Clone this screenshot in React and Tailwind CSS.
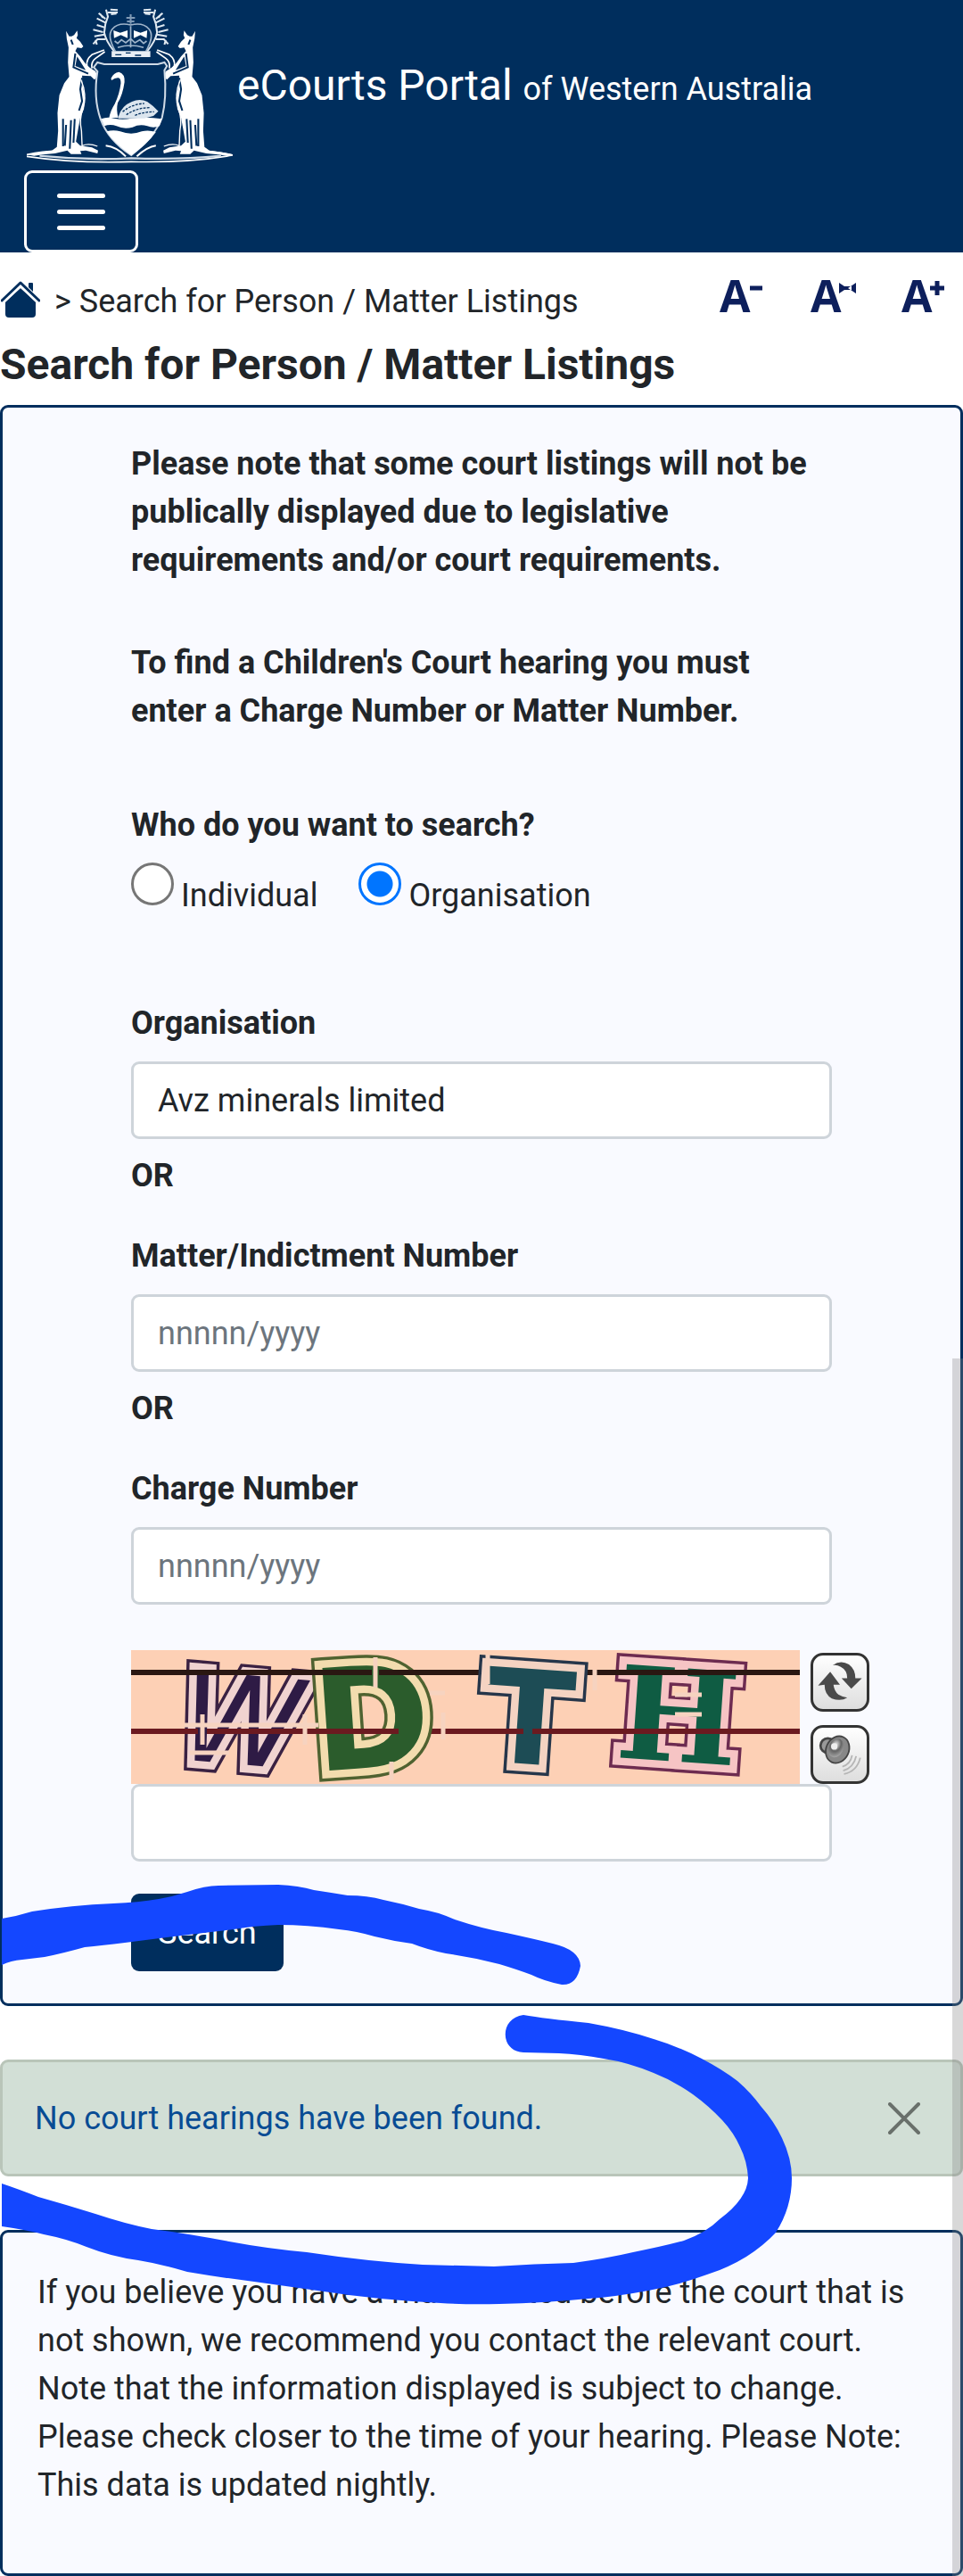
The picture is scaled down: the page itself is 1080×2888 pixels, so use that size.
import React, { useState } from 'react';

function CoatOfArms() {
  const kangaroo = (
    <>
      <path
        d="M216 104 L226 122 L234 122 L242 118 L252 103 L254 118 L250 128 L262 140 L272 156 L266 162 L252 160 L246 172 L262 190 L276 210 L290 226 L312 240 L318 258 L308 268 L296 256 L268 254 L270 290 L278 330 L274 366 L262 396 L256 430 L248 476 L262 490 L300 496 L320 506 L318 516 L280 506 L262 508 L266 518 L232 518 L220 506 L180 516 L140 520 L112 524 L88 520 L130 512 L170 506 L186 494 L190 440 L188 380 L194 320 L210 280 L226 258 L222 210 L224 160 L218 130 Z"
        fill="#fff"
      />
      <path
        d="M246 180 L240 226 L288 248 M232 134 L238 150 M268 262 L262 300 L268 340 L258 372 M206 400 L206 492 M232 404 L228 500 M216 420 L212 490 M244 400 L240 480"
        fill="none"
        stroke="#002e5d"
        strokeWidth="6"
      />
      <path d="M252 190 L246 222 L280 236 Z" fill="#002e5d" />
      <path d="M264 268 Q286 320 270 368 Q258 400 266 440 L268 490 Q290 480 318 492" fill="none" stroke="#fff" strokeWidth="4" />
      <path d="M340 168 L300 184 Q280 200 284 222 L304 244 M342 174 L312 196 Q296 208 300 230" fill="none" stroke="#fff" strokeWidth="5" />
      <path
        d="M384 34 L360 32 M384 42 L352 42 M346 32 L352 56 L344 80 L340 110 Q346 140 372 172 M322 44 L344 64 M316 62 L344 76 M316 84 L340 92 M304 100 L336 108 M308 122 L340 116 M304 148 L318 132 L344 132 M326 46 L336 60 M362 48 L380 46 M312 134 L316 150"
        fill="none"
        stroke="#dfe8f0"
        strokeWidth="6"
      />
    </>
  );

  return (
    <svg
      viewBox="88 24 670 525"
      preserveAspectRatio="none"
      className="h-[175px] w-[231px] shrink-0"
      role="img"
      aria-label="Western Australia coat of arms"
    >
      {kangaroo}
      <g transform="translate(852 0) scale(-1 1)">{kangaroo}</g>
      {/* crown */}
      <path
        d="M376 172 Q348 120 366 98 Q386 74 426 84 Q466 74 486 98 Q504 120 476 172"
        fill="none"
        stroke="#9fb4ca"
        strokeWidth="5"
      />
      <path d="M426 48 V80 M412 60 H440 M414 72 H438" stroke="#7f9ab6" strokeWidth="6" />
      <path d="M370 102 L392 110 L416 102 L416 128 L394 118 L372 128 Z M436 102 L458 110 L480 102 L478 128 L458 118 L436 128 Z" fill="#fff" />
      <path d="M374 138 L384 146 L396 134 L410 144 L426 130 L440 144 L456 134 L468 146 L478 138 M384 160 Q426 146 468 160 M426 88 V160" fill="none" stroke="#9fb4ca" strokeWidth="5" />
      <path d="M364 172 H490 V192 H364 Z" fill="#e8eef5" />
      <path d="M376 184 H396 M410 178 H426 M440 186 H460" stroke="#002e5d" strokeWidth="4" />
      {/* shield */}
      <path
        d="M318 210 L340 216 H514 L536 210 L544 222 L536 236 Q544 330 528 396 Q504 460 428 522 Q352 470 328 400 Q304 330 318 240 L306 226 Z"
        fill="#002e5d"
        stroke="#cfdae6"
        strokeWidth="6"
      />
      <path d="M330 400 Q350 392 372 398 Q400 404 428 398 Q480 392 528 400 L520 424 Q500 432 480 424 Q456 416 432 428 Q404 436 380 424 Q360 416 340 424 Z" fill="#fff" />
      <path d="M348 442 Q370 436 392 442 Q428 456 462 442 Q484 436 508 444 Q480 486 428 522 Q370 480 348 442 Z" fill="#fff" />
      {/* swan */}
      <path
        d="M362 264 Q370 244 388 242 Q408 248 406 276 Q400 320 384 346 Q378 370 386 396 H356 Q360 372 374 350 Q390 316 394 280 Q394 260 384 262 Q374 262 364 270 Z"
        fill="#fff"
      />
      <path d="M386 392 Q396 356 430 342 Q456 330 480 342 Q500 356 516 374 L500 390 L470 398 H386 Z" fill="#dbe5ee" />
      <path d="M400 376 Q430 350 470 348 M412 386 Q446 362 490 362 M440 388 Q470 376 502 376" fill="none" stroke="#002e5d" strokeWidth="4" strokeDasharray="8 4" />
      <path d="M88 520 Q140 508 190 508 M88 526 Q240 550 428 544 Q620 548 758 522 Q700 508 660 508" fill="none" stroke="#fff" strokeWidth="5" />
      <path d="M130 524 Q280 540 428 532 Q580 538 720 524" fill="none" stroke="#cfdae6" strokeWidth="7" />
      <path d="M345 490 Q380 494 410 526 M508 490 Q480 494 446 526" fill="none" stroke="#fff" strokeWidth="6" />
    </svg>
  );
}

function HomeIcon() {
  return (
    <svg viewBox="0 0 44 42" className="h-[42px] w-[44px]" aria-hidden="true">
      <path d="M5 23 L22 8 L39 23 V37 Q39 41 35 41 H9 Q5 41 5 37 Z" fill="#002e5d" />
      <path d="M31 3 Q31 2 32 2 H35 Q36 2 36 3 V15 L31 10 Z" fill="#002e5d" />
      <path d="M2 22 L22 3 L42 22" fill="none" stroke="#fff" strokeWidth="7" />
      <path d="M1 22 L22 2 L43 22" fill="none" stroke="#002e5d" strokeWidth="3" strokeLinecap="round" strokeLinejoin="round" />
      <path d="M31 3 H36 V12 L31 7 Z" fill="#002e5d" />
    </svg>
  );
}

function FontSizeButton({ label, children }) {
  return (
    <button type="button" aria-label={label} className="flex w-[54px] items-start text-[#0d1f5c]">
      <span className="font-['Open_Sans',sans-serif] text-[50px] leading-[40px] font-bold">A</span>
      <svg viewBox="0 0 20 20" className="mt-1 -ml-1 size-5 shrink-0" aria-hidden="true">
        {children}
      </svg>
    </button>
  );
}

// one captcha letter: dark outline, pale gap, solid core
function CaptchaLetter({ x, y, angle, size, font, weight, slant, outline, gap, core, children }) {
  const common = {
    x,
    y,
    fontSize: size,
    fontFamily: font,
    fontWeight: weight,
    fontStyle: slant,
    transform: `rotate(${angle} ${x} ${y})`,
  };
  return (
    <g>
      <text {...common} fill={outline} stroke={outline} strokeWidth="24">{children}</text>
      <text {...common} fill={core} stroke={gap} strokeWidth="17" paintOrder="stroke" aria-hidden="true">{children}</text>
    </g>
  );
}

function Captcha() {
  return (
    <svg viewBox="0 0 750 150" className="h-[150px] w-[750px] shrink-0 overflow-visible bg-[#fdd0b5]" role="img" aria-label="Captcha">
      <path d="M0 25 H750" stroke="#2a1712" strokeWidth="6" />
      <path d="M0 91 H750" stroke="#6b1a20" strokeWidth="6" />
      <CaptchaLetter x={52} y={122} angle={5} size={138} font="'DejaVu Sans', sans-serif" slant="italic" outline="#3a2142" gap="#f0d3d0" core="#2e1b45">W</CaptchaLetter>
      <CaptchaLetter x={208} y={136} angle={-4} size={158} font="'DejaVu Sans', sans-serif" weight="bold" outline="#4f6230" gap="#f3dcae" core="#2b5c2c">D</CaptchaLetter>
      <CaptchaLetter x={394} y={124} angle={4} size={146} font="'DejaVu Sans', sans-serif" weight="bold" outline="#26364a" gap="#f4d3c2" core="#1d4c55">T</CaptchaLetter>
      <CaptchaLetter x={542} y={120} angle={4} size={144} font="'DejaVu Serif', serif" weight="bold" outline="#6d2b50" gap="#f6c4c4" core="#0f5c43">H</CaptchaLetter>
      <path d="M0 25 H40 M48 25 H270 M278 25 H340 M525 25 H750" stroke="#2a1712" strokeWidth="6" />
      <path d="M0 91 H75 M85 91 H190 M200 91 H300 M356 91 H388 M396 91 H440 M450 91 H750" stroke="#6b1a20" strokeWidth="6" />
      <path d="M60 84 H210 M274 8 V42 M292 125 V146 M400 5 V38 M520 22 V45 M80 72 V106 M195 72 V106 M66 115 H110 M335 48 H352 M350 70 V100 M610 50 H640 M610 72 H640" stroke="#f6d3c0" strokeWidth="5" />
    </svg>
  );
}

function RefreshIcon() {
  return (
    <svg viewBox="0 0 66 66" className="size-full" aria-hidden="true">
      <path d="M24 12 Q34 5 44 11 Q52 17 52 28 L60 28 L47 41 L35 28 L42 28 Q42 18 34 14 Q29 11 24 12 Z" fill="#4a4a4a" />
      <path d="M42 52 Q34 57 23 53 Q14 48 14 36 L6 37 L21 20 L33 36 L25 36 Q26 44 31 48 Q36 51 42 52 Z" fill="#4a4a4a" />
    </svg>
  );
}

function SoundIcon() {
  return (
    <svg viewBox="0 0 66 66" className="size-full" aria-hidden="true">
      <defs>
        <radialGradient id="cone" cx="0.4" cy="0.35" r="0.7">
          <stop offset="0" stopColor="#eee" />
          <stop offset="0.5" stopColor="#666" />
          <stop offset="1" stopColor="#aaa" />
        </radialGradient>
      </defs>
      <circle cx="18" cy="22" r="9" fill="#999" stroke="#444" strokeWidth="3" />
      <ellipse cx="30" cy="27" rx="14" ry="17" fill="#888" stroke="#444" strokeWidth="2" transform="rotate(25 30 27)" />
      <ellipse cx="28" cy="25" rx="9" ry="12" fill="url(#cone)" transform="rotate(25 28 25)" />
      <circle cx="26" cy="23" r="4" fill="#eee" />
      <path d="M36 48 Q46 45 48 34 M37 53 Q50 49 53 35 M38 57 Q54 54 58 37" fill="none" stroke="#b5b5b5" strokeWidth="2" />
    </svg>
  );
}

function CaptchaButton({ label, children }) {
  return (
    <button
      type="button"
      aria-label={label}
      className="size-[66px] rounded-[14px] border-[3px] border-[#333] bg-linear-to-b from-white to-[#dedede]"
    >
      {children}
    </button>
  );
}

function TextField({ id, label, ...props }) {
  return (
    <div>
      <label htmlFor={id} className="mb-4 block font-bold">{label}</label>
      <input
        id={id}
        type="text"
        className="block h-[87px] w-full rounded-[9px] border-[3px] border-[#ced4da] bg-white px-[27px] placeholder:text-[#6c757d]"
        {...props}
      />
    </div>
  );
}

function Radio({ label, value, current, onChange }) {
  return (
    <label className="flex items-start gap-2">
      <input
        type="radio"
        name="searchType"
        value={value}
        checked={current === value}
        onChange={() => onChange(value)}
        className="size-12 appearance-none rounded-full border-[3px] border-[#767676] bg-white checked:border-[#0075ff] checked:bg-[radial-gradient(circle,#0075ff_14px,#fff_15px)]"
      />
      <span className="pt-[10px]">{label}</span>
    </label>
  );
}

function MarkerScribble() {
  return (
    <svg viewBox="0 2100 900 500" className="pointer-events-none absolute top-[2100px] left-0 h-[500px] w-[900px]" aria-hidden="true">
      <path
        d="M2 2151 Q20 2148 36 2143 Q80 2136 127 2134 Q155 2133 178 2129 Q195 2126 210 2121 Q230 2114 245 2114 L312 2113 Q335 2114 352 2119 Q372 2122 390 2125 Q412 2125 430 2130 Q450 2134 470 2140 Q490 2143 510 2152 Q540 2162 568 2167 Q600 2174 620 2179 Q650 2186 651 2204 Q647 2226 630 2225 Q610 2221 596 2214 Q580 2208 560 2202 Q530 2194 500 2190 Q480 2186 462 2179 Q440 2176 420 2171 Q400 2165 380 2163 Q345 2158 312 2158 Q285 2159 262 2163 Q200 2170 140 2178 Q115 2181 95 2183 Q70 2190 50 2194 L25 2197 Q12 2198 2 2203 Z"
        fill="#1447ff"
      />
      <path
        d="M587 2259 Q610 2263 660 2268 Q700 2275 733 2286 Q760 2294 787 2308 Q810 2320 827 2333 Q842 2346 853 2361 Q868 2378 877 2397 Q888 2420 888 2442 Q888 2475 870 2503 Q856 2518 837 2530 Q816 2543 793 2550 Q760 2562 727 2568 Q690 2575 660 2577 Q610 2582 560 2583 Q525 2584 494 2582 Q420 2578 356 2568 L285 2558 Q245 2553 210 2547 Q180 2538 155 2534 Q125 2530 97 2519 Q75 2510 49 2505 Q30 2500 2 2496 V2448 Q20 2454 43 2463 Q75 2472 107 2482 Q140 2493 170 2499 Q210 2504 257 2513 Q300 2521 344 2525 Q410 2535 474 2539 L554 2541 Q600 2538 643 2537 Q680 2532 710 2525 Q745 2518 767 2512 Q792 2503 807 2488 Q838 2465 839 2442 Q838 2423 830 2407 Q823 2391 810 2377 Q795 2361 777 2348 Q756 2333 733 2324 Q704 2312 677 2308 Q650 2303 627 2302 L587 2301 C560 2300 560 2262 587 2259 Z"
        fill="#1447ff"
      />
    </svg>
  );
}

export default function App() {
  const [searchType, setSearchType] = useState('organisation');
  const [organisation, setOrganisation] = useState('Avz minerals limited');
  const [showAlert, setShowAlert] = useState(true);

  return (
    <div className="relative bg-white font-[Roboto,sans-serif] text-[36px] leading-[54px] text-[#212529]">
      <header className="flex flex-col items-start gap-2 bg-[#002e5d] pt-2 pl-[27px] text-white">
        <div className="flex items-center gap-[5px] pl-[3px]">
          <CoatOfArms />
          <div className="pt-1 text-[48px]">
            eCourts Portal <span className="text-[36px]">of Western Australia</span>
          </div>
        </div>
        <button
          type="button"
          aria-label="Toggle navigation"
          className="flex h-[92px] w-32 flex-col items-center justify-center gap-[13px] rounded-[9px] border-[3px] border-white"
        >
          <span className="h-[5px] w-[54px] rounded-full bg-white" />
          <span className="h-[5px] w-[54px] rounded-full bg-white" />
          <span className="h-[5px] w-[54px] rounded-full bg-white" />
        </button>
      </header>

      <div className="mt-7 flex items-start justify-between pr-[15px]">
        <nav className="flex items-start">
          <a href="#home" aria-label="Home" className="mr-4 ml-px pt-1">
            <HomeIcon />
          </a>
          <span>&gt; Search for Person / Matter Listings</span>
        </nav>
        <div className="flex gap-12">
          <FontSizeButton label="Decrease text size">
            <path d="M3 8 H17" stroke="currentColor" strokeWidth="5" />
          </FontSizeButton>
          <FontSizeButton label="Reset text size">
            <path d="M1 2 L10 8 L1 14 Z M20 2 L11 8 L20 14 Z M6 6 H15 V10 H6 Z" fill="currentColor" />
          </FontSizeButton>
          <FontSizeButton label="Increase text size">
            <path d="M1 8 H17 M9 0 V16" stroke="currentColor" strokeWidth="5" />
          </FontSizeButton>
        </div>
      </div>

      <h1 className="mt-4 mb-[17px] text-[48px] leading-[56px] font-bold">Search for Person / Matter Listings</h1>

      <form
        onSubmit={(e) => e.preventDefault()}
        className="rounded-[9px] border-[3px] border-[#002e5d] bg-[#f9faff] px-36 pt-9 pb-9"
      >
        <p className="mb-[61px] font-bold">
          Please note that some court listings will not be publically displayed due to legislative requirements and/or
          court requirements.
        </p>
        <p className="mb-[74px] font-bold">
          To find a Children's Court hearing you must enter a Charge Number or Matter Number.
        </p>

        <fieldset>
          <legend className="mb-[15px] font-bold">Who do you want to search?</legend>
          <div className="flex gap-[46px]">
            <Radio label="Individual" value="individual" current={searchType} onChange={setSearchType} />
            <Radio label="Organisation" value="organisation" current={searchType} onChange={setSearchType} />
          </div>
        </fieldset>

        <div className="mt-[89px]">
          <TextField
            id="organisation"
            label="Organisation"
            value={organisation}
            onChange={(e) => setOrganisation(e.target.value)}
          />
          <p className="mt-[14px] mb-9 font-bold">OR</p>
          <TextField id="matter" label="Matter/Indictment Number" placeholder="nnnnn/yyyy" />
          <p className="mt-[14px] mb-9 font-bold">OR</p>
          <TextField id="charge" label="Charge Number" placeholder="nnnnn/yyyy" />
        </div>

        <div className="mt-[51px] flex items-end gap-3">
          <Captcha />
          <div className="flex flex-col gap-[15px]">
            <CaptchaButton label="New captcha">
              <RefreshIcon />
            </CaptchaButton>
            <CaptchaButton label="Play captcha">
              <SoundIcon />
            </CaptchaButton>
          </div>
        </div>
        <input
          type="text"
          aria-label="Captcha code"
          className="block h-[87px] w-full rounded-[9px] border-[3px] border-[#ced4da] bg-white px-[27px]"
        />

        <button type="submit" className="mt-9 block h-[87px] rounded-[9px] bg-[#002e5d] px-[30px] text-white">
          Search
        </button>
      </form>

      {showAlert && (
        <div
          role="alert"
          className="mt-[60px] flex h-[131px] items-center justify-between rounded-[9px] border-[3px] border-[#b9c5b9] bg-[#d2dfd6] pr-[45px] pl-9 text-[#084c94]"
        >
          <span>No court hearings have been found.</span>
          <button type="button" aria-label="Close" onClick={() => setShowAlert(false)}>
            <svg viewBox="0 0 36 36" className="size-9" aria-hidden="true">
              <path d="M2 2 L34 34 M34 2 L2 34" stroke="#69706b" strokeWidth="4" strokeLinecap="round" />
            </svg>
          </button>
        </div>
      )}

      <section className="mt-[60px] rounded-[9px] border-[3px] border-[#002e5d] bg-[#f9faff] px-[39px] pt-10 pb-[72px]">
        If you believe you have a matter listed before the court that is not shown, we recommend you contact the
        relevant court. Note that the information displayed is subject to change. Please check closer to the time of
        your hearing. Please Note: This data is updated nightly.
      </section>

      <MarkerScribble />
      {/* scroll thumb */}
      <div className="pointer-events-none absolute top-[1523px] right-0 bottom-0 w-3 bg-[#868686]/32" />
    </div>
  );
}
